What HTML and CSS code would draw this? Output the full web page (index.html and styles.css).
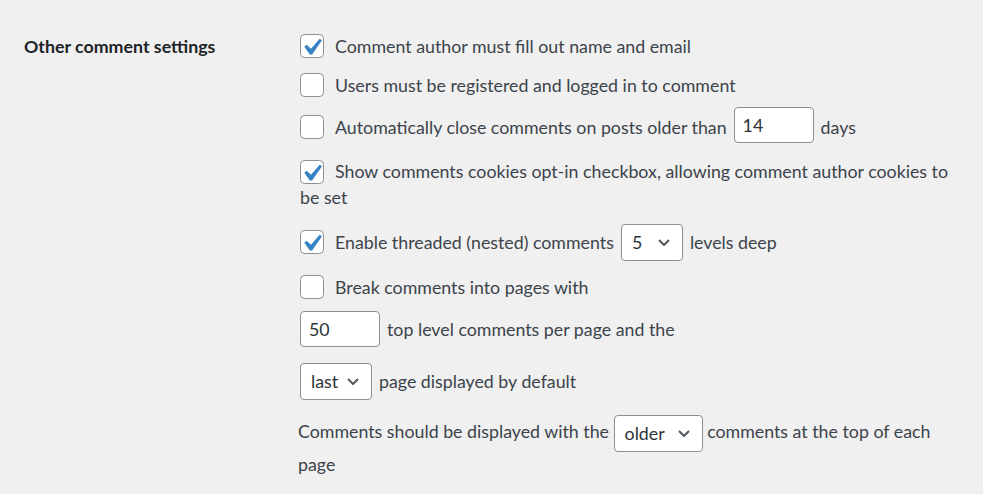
FILE: index.html
```html
<!DOCTYPE html>
<html>
<head>
<meta charset="utf-8">
<link rel="stylesheet" href="styles.css">
</head>
<body>
<div class="form-row">
  <div class="th">Other comment settings</div>
  <div class="td">
    <label class="opt r1">
      <svg class="cb" viewBox="0 0 24 24"><rect x="0.5" y="0.5" width="23" height="23" rx="4"/><path d="M14.83 4.89l1.34.94-5.81 8.38H9.02L5.78 9.67l1.34-1.25 2.570 2.4z" transform="translate(-5.5 -3.6) scale(1.7)"/></svg>
      <span>Comment author must fill out name and email</span>
    </label>
    <label class="opt r2">
      <svg class="cb" viewBox="0 0 24 24"><rect x="0.5" y="0.5" width="23" height="23" rx="4"/></svg>
      <span>Users must be registered and logged in to comment</span>
    </label>
    <div class="opt r3">
      <svg class="cb" viewBox="0 0 24 24"><rect x="0.5" y="0.5" width="23" height="23" rx="4"/></svg>
      <span>Automatically close comments on posts older than</span>
      <span class="field num up">14</span>
      <span>days</span>
    </div>
    <label class="wrap r4"><svg class="cb inline" viewBox="0 0 24 24"><rect x="0.5" y="0.5" width="23" height="23" rx="4"/><path d="M14.83 4.89l1.34.94-5.81 8.38H9.02L5.78 9.67l1.34-1.25 2.57 2.4z" transform="translate(-5.5 -3.6) scale(1.7)"/></svg><span>Show comments cookies opt-in checkbox, allowing comment author cookies to</span> <span>be set</span></label>
    <div class="opt r5">
      <svg class="cb" viewBox="0 0 24 24"><rect x="0.5" y="0.5" width="23" height="23" rx="4"/><path d="M14.83 4.89l1.34.94-5.81 8.38H9.02L5.78 9.67l1.34-1.25 2.57 2.4z" transform="translate(-5.5 -3.6) scale(1.7)"/></svg>
      <span>Enable threaded (nested) comments</span>
      <span class="field sel sel5"><span>5</span><svg class="chev" viewBox="0 0 12 7"><path d="M1 1l5 5 5-5"/></svg></span>
      <span>levels deep</span>
    </div>
    <label class="opt r6">
      <svg class="cb" viewBox="0 0 24 24"><rect x="0.5" y="0.5" width="23" height="23" rx="4"/></svg>
      <span>Break comments into pages with</span>
    </label>
    <div class="opt r7">
      <span class="field num">50</span>
      <span>top level comments per page and the</span>
    </div>
    <div class="opt r8">
      <span class="field sel sellast"><span>last</span><svg class="chev" viewBox="0 0 12 7"><path d="M1 1l5 5 5-5"/></svg></span>
      <span>page displayed by default</span>
    </div>
    <div class="wrap r9"><span>Comments should be displayed with the</span> <span class="field sel selolder inline"><span>older</span><svg class="chev" viewBox="0 0 12 7"><path d="M1 1l5 5 5-5"/></svg></span> <span>comments at the top of each</span> <span>page</span></div>
  </div>
</div>
</body>
</html>
```

FILE: styles.css
```css
html, body {
  margin: 0;
  padding: 0;
  background: #f0f0f1;
}
body {
  font-family: Lato, "Noto Sans", sans-serif;
  font-size: 17.8px;
  color: #3c434a;
  width: 983px;
  height: 494px;
  overflow: hidden;
}
.form-row {
  display: grid;
  grid-template-columns: 276px 663px;
  padding-left: 24px;
}
.th {
  color: #1d2327;
  font-weight: 700;
  padding-top: 34px;
  line-height: 24px;
}
.td {
  padding-top: 26px;
  line-height: 25px;
}
.opt {
  display: flex;
  align-items: center;
  gap: 7px;
}
.opt .cb {
  margin-right: 4px;
}
.cb {
  width: 24px;
  height: 24px;
  flex: none;
  display: block;
}
.cb rect {
  fill: #fff;
  stroke: #8c8f94;
  stroke-width: 1;
}
.cb path {
  fill: #3582c4;
}
.cb.inline {
  display: inline-block;
  vertical-align: middle;
  margin: -4px 11px 0 0;
}
.field {
  box-sizing: border-box;
  height: 36px;
  background: #fff;
  border: 1px solid #8c8f94;
  border-radius: 4px;
  display: flex;
  align-items: center;
  padding: 0 8px;
  color: #2c3338;
}
.num {
  width: 80px;
}
.up {
  margin-bottom: 4px;
}
.sel {
  height: 37px;
  justify-content: space-between;
  padding: 0 12px 0 10px;
}
.chev {
  width: 12px;
  height: 7px;
}
.chev path {
  fill: none;
  stroke: #50575e;
  stroke-width: 2;
}
.sel5 { width: 62px; }
.sellast { width: 72px; }
.selolder { width: 89px; }
.field.inline {
  display: inline-flex;
  vertical-align: middle;
}
.r1 { height: 40px; }
.r2 { height: 38px; }
.r3 { height: 46px; }
.r4 { display: block; margin-top: 9px; line-height: 25.5px; }
.r5 { height: 40px; margin-top: 12px; }
.r6 { height: 40px; margin-top: 5px; }
.r7 { height: 40px; margin-top: 2px; }
.r8 { height: 41px; margin-top: 12px; }
.r9 { display: block; margin-top: 13px; margin-left: -2px; max-width: 650px; }
```
